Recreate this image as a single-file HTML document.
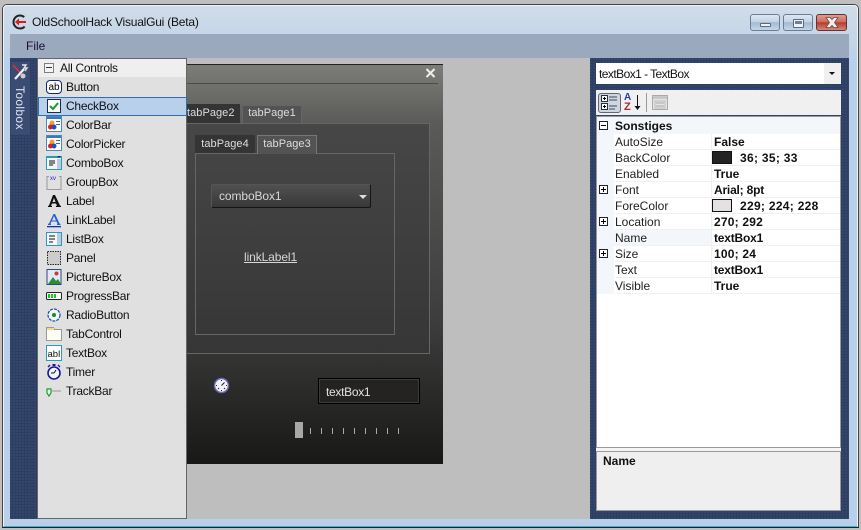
<!DOCTYPE html>
<html><head><meta charset="utf-8">
<style>
html,body{margin:0;padding:0;width:861px;height:530px;overflow:hidden;background:#bfbfbf;font-family:"Liberation Sans",sans-serif;font-size:12px;color:#111}
div,span,svg{position:absolute;box-sizing:border-box}
.t{white-space:nowrap;line-height:14px}
.navy{background-color:#2d3e63;background-image:radial-gradient(circle at 1px 1px,#36486f 0.8px,transparent 1px);background-size:3px 3px}
.it{left:66px;color:#111;letter-spacing:-.25px}
.ic{left:46px;width:16px;height:16px}
.pn{left:615px;color:#222}
.pv{left:714px;font-weight:bold;color:#111}
.row{left:615px;width:225px;height:1px;background:#f0f0f0}
.pm{left:599px;width:9px;height:9px;border:1px solid #222;background:#fff}
.pm:before{content:"";position:absolute;left:1px;top:3px;width:5px;height:1px;background:#000}
.pm.p:after{content:"";position:absolute;left:3px;top:1px;width:1px;height:5px;background:#000}
.wb{top:14px;height:17px;border:1px solid #6d7c94;border-radius:3px;background:linear-gradient(#dce7f2 0%,#c3d3e4 45%,#a5b9d0 50%,#c3d6e8 100%)}
.tab{height:19px;color:#ddd;text-align:center;line-height:18px;font-size:11px;letter-spacing:.05px;white-space:nowrap}
</style></head><body>

<!-- window -->
<div style="left:2px;top:4px;width:857px;height:524px;border:1px solid #444;border-radius:5px 5px 0 0;background:linear-gradient(#d0dde9 0,#c6d6e7 30px,#b8d0ea 60px);"></div>
<div style="left:3px;top:5px;width:855px;height:522px;border:1px solid #eef3f8;border-radius:4px 4px 0 0;border-bottom:1px solid #35b4dc"></div>
<div style="left:2px;top:527px;width:857px;height:1px;background:#222"></div>

<!-- title -->
<svg style="left:12px;top:14px" width="16" height="16" viewBox="0 0 16 16"><circle cx="8" cy="8" r="6.500" fill="none" stroke="#222" stroke-width="2" stroke-dasharray="30 11" stroke-dashoffset="-5"/><path d="M3 8l4-3.500V7h7v2H7v2.500z" fill="#e01818"/></svg>
<div class="t" style="left:32px;top:15px;font-size:12px;letter-spacing:-.22px;color:#111">OldSchoolHack VisualGui (Beta)</div>
<div class="wb" style="left:750px;width:30px"></div>
<div style="left:760px;top:23px;width:11px;height:4px;background:#eef2f6;border:1px solid #5a6a80;border-radius:1px"></div>
<div class="wb" style="left:783px;width:30px"></div>
<div style="left:793px;top:19px;width:11px;height:9px;background:#eef2f6;border:1px solid #5a6a80;border-radius:1px"></div>
<div style="left:795px;top:21px;width:7px;height:3px;background:#6d7f98"></div>
<div style="left:816px;top:14px;width:31px;height:17px;border:1px solid #6b2c34;border-radius:3px;background:linear-gradient(#dc9e90 0%,#cf6e5c 45%,#b83c2c 52%,#d08a78 100%)"></div>
<svg style="left:825px;top:17px" width="14" height="11" viewBox="0 0 14 11"><path d="M1 .5h4l2 2 2-2h4l-3.500 5 3.500 5H9l-2-2-2 2H1l3.500-5z" fill="#eee" stroke="#6b4a48" stroke-width=".8"/></svg>

<!-- menu -->
<div style="left:10px;top:34px;width:839px;height:24px;background:#9ba9bf"></div>
<div class="t" style="left:26px;top:39px;color:#1c1030;font-size:12px">File</div>

<!-- central area -->
<div style="left:37px;top:58px;width:553px;height:461px;background:#bebebe"></div>

<!-- left dock -->
<div class="navy" style="left:10px;top:58px;width:28px;height:461px"></div>
<div style="left:11px;top:62px;width:19px;height:73px;background:#3a4c74;border-radius:2px"></div>
<svg style="left:12px;top:64px" width="17" height="17" viewBox="0 0 17 17"><path d="M1 1l11 12" stroke="#d33" stroke-width="1.600"/><path d="M3 15L12 5" stroke="#f2f2f2" stroke-width="2.200"/><path d="M10 1l4 0-2 3 3 0-2 3" stroke="#e4e4e4" stroke-width="1.400" fill="none"/><circle cx="11" cy="12" r="2.500" fill="#ccc"/></svg>
<div class="t" style="left:14px;top:86px;color:#dfe4ee;font-size:12px;letter-spacing:.35px;writing-mode:vertical-rl;line-height:12px">Toolbox</div>

<!-- toolbox panel -->
<div style="left:37px;top:58px;width:150px;height:461px;background:#e0e0e0;border:1px solid #666"></div>
<div style="left:38px;top:59px;width:148px;height:18px;background:#efefef"></div>
<div style="left:44px;top:63px;width:10px;height:10px;border:1px solid #7a7f8a;background:#f4f4f4"></div>
<div style="left:46px;top:67px;width:6px;height:1px;background:#333"></div>
<div class="t" style="left:60px;top:61px;letter-spacing:-.3px">All Controls</div>
<div style="left:38px;top:97px;width:149px;height:19px;background:#b8d0ea;border:1px solid #3070b0"></div>

<div class="t it" style="top:80px">Button</div>
<div class="t it" style="top:99px">CheckBox</div>
<div class="t it" style="top:118px">ColorBar</div>
<div class="t it" style="top:137px">ColorPicker</div>
<div class="t it" style="top:156px">ComboBox</div>
<div class="t it" style="top:175px">GroupBox</div>
<div class="t it" style="top:194px">Label</div>
<div class="t it" style="top:213px">LinkLabel</div>
<div class="t it" style="top:232px">ListBox</div>
<div class="t it" style="top:251px">Panel</div>
<div class="t it" style="top:270px">PictureBox</div>
<div class="t it" style="top:289px">ProgressBar</div>
<div class="t it" style="top:308px">RadioButton</div>
<div class="t it" style="top:327px">TabControl</div>
<div class="t it" style="top:346px">TextBox</div>
<div class="t it" style="top:365px">Timer</div>
<div class="t it" style="top:384px">TrackBar</div>

<!-- icons -->
<div class="t" style="left:46px;top:80px;width:16px;height:14px;border:1px solid #0a2a78;border-radius:4px;background:#fff;font-size:10px;line-height:13px;text-align:center;color:#000">ab</div>
<svg class="ic" style="top:98px" viewBox="0 0 16 16"><rect x="1.500" y="1.500" width="13" height="13" fill="#fff" stroke="#1a2a60"/><path d="M4 8l3 3 5-6" fill="none" stroke="#10a020" stroke-width="2"/></svg>
<svg class="ic" style="top:116px" viewBox="0 0 16 16"><rect x=".5" y=".5" width="15" height="15" fill="#fff" stroke="#4a8ac0"/><rect x="1" y="1" width="14" height="2" fill="#3a78c0"/><circle cx="6" cy="7" r="2.500" fill="#f0a020"/><circle cx="4.500" cy="11" r="2.500" fill="#e02020"/><circle cx="8" cy="11" r="2.500" fill="#2050c0"/><rect x="10" y="5" width="4" height="1" fill="#36c"/><rect x="10" y="8" width="4" height="1" fill="#36c"/></svg>
<svg class="ic" style="top:135px" viewBox="0 0 16 16"><rect x=".5" y=".5" width="15" height="15" fill="#fff" stroke="#4a8ac0"/><rect x="1" y="1" width="14" height="2" fill="#3a78c0"/><circle cx="6" cy="7" r="2.500" fill="#f0a020"/><circle cx="4.500" cy="11" r="2.500" fill="#e02020"/><circle cx="8" cy="11" r="2.500" fill="#2050c0"/><rect x="10" y="5" width="4" height="1" fill="#36c"/><rect x="10" y="8" width="4" height="1" fill="#36c"/></svg>
<svg class="ic" style="top:155px" viewBox="0 0 16 16"><rect x=".5" y="1.500" width="15" height="13" fill="#f4f8fc" stroke="#2a9ac0"/><rect x="0" y="1" width="16" height="2" fill="#2a9ac0"/><rect x="11" y="4" width="4" height="10" fill="#b8cce0"/><path d="M11 1h4l-2 2z" fill="#1a2a90"/><path d="M3 6h6M3 8h6M3 10h4" stroke="#111"/></svg>
<svg class="ic" style="top:174px" viewBox="0 0 16 16"><path d="M3 2.500H1v13h14v-13h-2" fill="none" stroke="#999" stroke-width="1"/><text x="4" y="6" font-size="6" font-family="Liberation Sans" fill="#2222cc">xv</text></svg>
<svg class="ic" style="top:193px" viewBox="0 0 16 16"><path d="M2 14h4v-1l-1-.5 1-2h4l1 2-1 .5v1h5v-1l-1-.5L9 2H7L3 12.500 2 13zM6.500 9L8 5l1.500 4z" fill="#111"/></svg>
<svg class="ic" style="top:212px" viewBox="0 0 16 16"><path d="M2 13h3v-1l-.5-.5 1-2h5l1 2-.5.5v1h3.500v-1l-1-.5L9 2H7.500L3 11.500 2 12zM6 8.500L8 4l2 4.500z" fill="#2060d8"/><rect x="1" y="14" width="14" height="1.300" fill="#1030c0"/></svg>
<svg class="ic" style="top:231px" viewBox="0 0 16 16"><rect x=".5" y="1.500" width="15" height="13" fill="#f4f8fc" stroke="#2a9ac0"/><rect x="11" y="2" width="4" height="12" fill="#b8cce0"/><path d="M3 5h6M3 8h6M3 11h4" stroke="#111"/></svg>
<svg class="ic" style="top:250px" viewBox="0 0 16 16"><rect x="1.500" y="1.500" width="13" height="13" fill="#ccc" stroke="#222" stroke-dasharray="1.500 1"/></svg>
<svg class="ic" style="top:269px" viewBox="0 0 16 16"><rect x="1" y=".5" width="14" height="15" fill="#dfeaf8" stroke="#2a4a80"/><path d="M2 15l5-7 3 4 2-2 3 5z" fill="#2c8c30"/><circle cx="10.500" cy="4.500" r="2" fill="#e03030"/></svg>
<svg class="ic" style="top:288px" viewBox="0 0 16 16"><rect x=".5" y="4.500" width="15" height="7" rx="1" fill="#fff" stroke="#222"/><rect x="2" y="6" width="2" height="4" fill="#20c020"/><rect x="5" y="6" width="2" height="4" fill="#20c020"/><rect x="8" y="6" width="2" height="4" fill="#20c020"/></svg>
<svg class="ic" style="top:307px" viewBox="0 0 16 16"><circle cx="8" cy="8" r="6" fill="#f4f8fc" stroke="#1a4a90" stroke-width="1.200" stroke-dasharray="3 1"/><circle cx="8" cy="8" r="2" fill="#109020"/></svg>
<svg class="ic" style="top:326px" viewBox="0 0 16 16"><path d="M.5 14.500V1.500h7l1 2h7v11z" fill="#fdfdf4" stroke="#999"/><rect x="1" y="2" width="7" height="2" fill="#f0dc78"/></svg>
<svg class="ic" style="top:345px" viewBox="0 0 16 16"><rect x=".5" y=".5" width="15" height="15" fill="#fff" stroke="#2a9ac0"/><text x="1.500" y="12" font-size="9.500" font-family="Liberation Sans" fill="#111">abl</text></svg>
<svg class="ic" style="top:364px" viewBox="0 0 16 16"><circle cx="8" cy="9" r="6" fill="#f2f4ff" stroke="#1a1a90" stroke-width="1.600"/><path d="M8 9l2-3M8 9H5" stroke="#111"/><rect x="6.500" y="0" width="3" height="2" fill="#1a1a90"/><path d="M2 3l2-2M14 3l-2-2" stroke="#1a1a90" stroke-width="1.300"/></svg>
<svg class="ic" style="top:383px" viewBox="0 0 16 16"><path d="M1 6h4v4L3 13 1 10z" fill="#fff" stroke="#10a020" stroke-width="1.200"/><path d="M6 8h9" stroke="#999"/></svg>

<!-- form -->
<div style="left:187px;top:64px;width:256px;height:400px;background:linear-gradient(#7c7c78 0%,#5a5a58 15%,#3c3c3c 65%,#181816 100%);border-top:1px solid #222"></div>
<div style="left:187px;top:83px;width:251px;height:1px;background:#4a4a48"></div>
<svg style="left:425px;top:68px" width="11" height="10" viewBox="0 0 11 10"><path d="M1.500 1l8 8M9.500 1l-8 8" stroke="#eee" stroke-width="2"/></svg>
<!-- outer tab control -->
<div style="left:187px;top:123px;width:243px;height:231px;border:1px solid #666;border-left:0;background:linear-gradient(#474747,#363636)"></div>
<div class="tab" style="left:187px;top:104px;width:53px;background:#343434;text-align:left">tabPage2</div>
<div class="tab" style="left:242px;top:105px;width:60px;height:18px;background:#535353;border:1px solid #666;border-bottom:0;line-height:15px">tabPage1</div>
<!-- inner tab control -->
<div style="left:195px;top:153px;width:200px;height:182px;border:1px solid #666"></div>
<div class="tab" style="left:195px;top:135px;width:60px;height:18px;background:#343434;line-height:19px">tabPage4</div>
<div class="tab" style="left:257px;top:135px;width:60px;height:19px;background:#535353;border:1px solid #777;border-bottom:0;line-height:17px">tabPage3</div>
<!-- combo -->
<div style="left:211px;top:184px;width:160px;height:24px;background:linear-gradient(#505050,#383838);border:1px solid #555;border-right:1px solid #151515;border-bottom:1px solid #151515;border-radius:2px"></div>
<div class="t" style="left:219px;top:189px;color:#d8d8d8;letter-spacing:-.1px">comboBox1</div>
<div style="left:359px;top:195px;width:0;height:0;border-left:4px solid transparent;border-right:4px solid transparent;border-top:4px solid #ddd"></div>
<div class="t" style="left:244px;top:250px;color:#d8d8d8;text-decoration:underline;letter-spacing:-.1px">linkLabel1</div>
<!-- timer -->
<svg style="left:213px;top:377px" width="17" height="17" viewBox="0 0 17 17"><circle cx="8.500" cy="8.500" r="7" fill="#f2f2fa" stroke="#6a6ab0" stroke-width="1.500"/><path d="M8.500 8.500l3-3M8.500 3v1M8.500 13v1M3 8.500h1M13 8.500h1M5 12l1-1M12 12l-1-1" stroke="#222"/></svg>
<!-- textbox -->
<div style="left:318px;top:378px;width:102px;height:26px;background:#242321;border:1px solid #000;box-shadow:inset 0 0 0 1px #3c3c3a"></div>
<div class="t" style="left:326px;top:385px;color:#e5e0e4;letter-spacing:-.3px">textBox1</div>
<!-- trackbar -->
<div style="left:295px;top:422px;width:8px;height:16px;background:#a8a8a6"></div>
<div style="left:310px;top:428px;width:1px;height:6px;background:#aaa"></div>
<div style="left:321px;top:428px;width:1px;height:6px;background:#aaa"></div>
<div style="left:332px;top:428px;width:1px;height:6px;background:#aaa"></div>
<div style="left:343px;top:428px;width:1px;height:6px;background:#aaa"></div>
<div style="left:354px;top:428px;width:1px;height:6px;background:#aaa"></div>
<div style="left:365px;top:428px;width:1px;height:6px;background:#aaa"></div>
<div style="left:376px;top:428px;width:1px;height:6px;background:#aaa"></div>
<div style="left:387px;top:428px;width:1px;height:6px;background:#aaa"></div>
<div style="left:398px;top:428px;width:1px;height:6px;background:#aaa"></div>

<!-- right dock -->
<div class="navy" style="left:590px;top:58px;width:259px;height:461px"></div>
<div style="left:596px;top:63px;width:245px;height:21px;background:#fff"></div>
<div style="left:824px;top:63px;width:17px;height:21px;background:#f0f0f0"></div>
<div style="left:829px;top:72px;width:0;height:0;border-left:3px solid transparent;border-right:3px solid transparent;border-top:3px solid #111"></div>
<div class="t" style="left:599px;top:67px;color:#111;letter-spacing:-.55px">textBox1 - TextBox</div>

<!-- grid toolbar -->
<div style="left:596px;top:90px;width:245px;height:25px;background:#f0f0f0"></div>
<div style="left:598px;top:93px;width:23px;height:20px;background:#cfd6e2;border:1px solid #666;border-radius:3px"></div>
<svg style="left:601px;top:95px" width="18" height="16" viewBox="0 0 18 16"><rect x=".5" y=".5" width="6" height="6" fill="#fff" stroke="#234"/><rect x=".5" y="8.500" width="6" height="6" fill="#fff" stroke="#234"/><path d="M2 3.500h3M2 11.500h3M3.500 2v3M3.500 10v3" stroke="#000"/><path d="M8 2h8M8 5h8M8 11h8M8 14h6" stroke="#567" stroke-width="1.200"/></svg>
<div class="t" style="left:624px;top:93px;color:#2a3ab0;font-size:10px;font-weight:bold;line-height:10px">A</div>
<div class="t" style="left:624px;top:102px;color:#a03030;font-size:11px;font-weight:bold;line-height:10px">Z</div>
<svg style="left:634px;top:94px" width="7" height="18" viewBox="0 0 7 18"><path d="M3.500 1v12" stroke="#111"/><path d="M.5 12h6l-3 4z" fill="#111"/></svg>
<div style="left:646px;top:93px;width:1px;height:19px;background:#999"></div>
<svg style="left:652px;top:95px" width="17" height="16" viewBox="0 0 17 16"><rect x=".5" y=".5" width="15" height="14" fill="#e4e4e4" stroke="#aaa"/><rect x="1" y="1" width="14" height="3" fill="#c8c8c8"/><path d="M4 8h8M4 11h8" stroke="#aaa"/><rect x="3" y="6" width="10" height="7" fill="none" stroke="#bbb"/></svg>

<!-- grid -->
<div style="left:596px;top:116px;width:245px;height:332px;background:#fff;border:1px solid #9a9a9a;border-bottom:1px solid #9a9a9a"></div>
<div style="left:597px;top:117px;width:243px;height:17px;background:#f3f6fb"></div>
<div style="left:597px;top:134px;width:17px;height:160px;background:#f3f6fb"></div>
<div style="left:614px;top:230px;width:97px;height:16px;background:#f3f6fb"></div>
<div style="left:711px;top:134px;width:1px;height:160px;background:#f0f0f0"></div>
<div class="row" style="top:149px"></div><div class="row" style="top:165px"></div><div class="row" style="top:181px"></div><div class="row" style="top:197px"></div><div class="row" style="top:213px"></div><div class="row" style="top:229px"></div><div class="row" style="top:245px"></div><div class="row" style="top:261px"></div><div class="row" style="top:277px"></div><div class="row" style="top:293px"></div>

<div class="pm" style="top:121px"></div>
<div class="t" style="left:615px;top:119px;font-weight:bold;color:#111">Sonstiges</div>

<div class="t pn" style="top:135px">AutoSize</div><div class="t pv" style="top:135px">False</div>
<div class="t pn" style="top:151px">BackColor</div>
<div style="left:712px;top:151px;width:20px;height:13px;background:#242321;border:1px solid #111"></div>
<div class="t pv" style="left:740px;top:151px;letter-spacing:.3px">36; 35; 33</div>
<div class="t pn" style="top:167px">Enabled</div><div class="t pv" style="top:167px">True</div>
<div class="pm p" style="top:185px"></div>
<div class="t pn" style="top:183px">Font</div><div class="t pv" style="top:183px;letter-spacing:-.2px">Arial; 8pt</div>
<div class="t pn" style="top:199px">ForeColor</div>
<div style="left:712px;top:199px;width:20px;height:13px;background:#e5e0e4;border:1px solid #111"></div>
<div class="t pv" style="left:740px;top:199px;letter-spacing:.3px">229; 224; 228</div>
<div class="pm p" style="top:217px"></div>
<div class="t pn" style="top:215px">Location</div><div class="t pv" style="top:215px;letter-spacing:.2px">270; 292</div>
<div class="t pn" style="top:231px">Name</div><div class="t pv" style="top:231px;letter-spacing:-.2px">textBox1</div>
<div class="pm p" style="top:249px"></div>
<div class="t pn" style="top:247px">Size</div><div class="t pv" style="top:247px;letter-spacing:.2px">100; 24</div>
<div class="t pn" style="top:263px">Text</div><div class="t pv" style="top:263px;letter-spacing:-.2px">textBox1</div>
<div class="t pn" style="top:279px">Visible</div><div class="t pv" style="top:279px">True</div>

<!-- description -->
<div style="left:596px;top:451px;width:245px;height:60px;background:#efefef;border:1px solid #9a9a9a"></div>
<div style="left:596px;top:448px;width:245px;height:3px;background:#f4f4f4"></div>
<div class="t" style="left:603px;top:454px;font-weight:bold;color:#111">Name</div>
</body></html>
